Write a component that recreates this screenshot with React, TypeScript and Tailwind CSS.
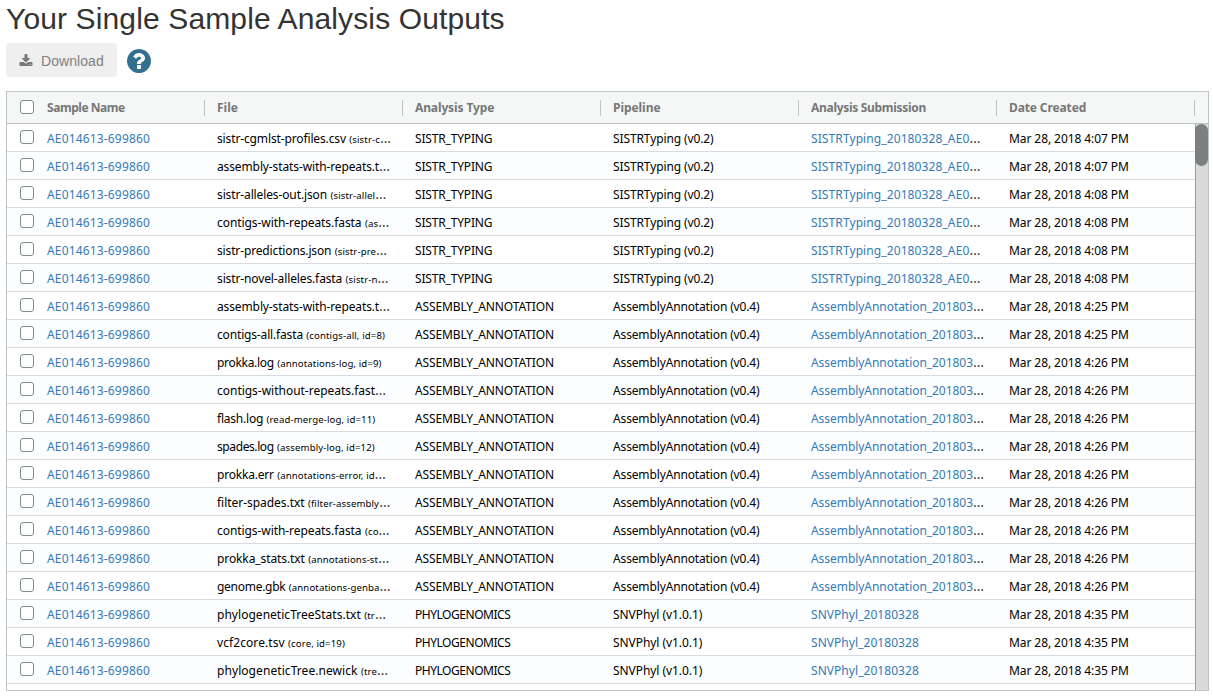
type Row = {
  file: string;
  fileClass: string;
  note?: string;
  fileCut?: boolean;
  type: string;
  typeClass: string;
  pipeline: string;
  pipelineClass: string;
  submission: string;
  submissionClass: string;
  submissionCut?: boolean;
  time: string;
};

const sistr = {
  type: "SISTR_TYPING",
  typeClass: "tracking-[-0.17px]",
  pipeline: "SISTRTyping (v0.2)",
  pipelineClass: "tracking-[-0.11px]",
  submission: "SISTRTyping_20180328_AE0",
  submissionClass: "tracking-[0.1px]",
  submissionCut: true,
};
const assembly = {
  type: "ASSEMBLY_ANNOTATION",
  typeClass: "tracking-[-0.11px]",
  pipeline: "AssemblyAnnotation (v0.4)",
  pipelineClass: "tracking-[-0.14px]",
  submission: "AssemblyAnnotation_201803",
  submissionClass: "tracking-[-0.05px]",
  submissionCut: true,
};
const phylo = {
  type: "PHYLOGENOMICS",
  typeClass: "tracking-[-0.47px]",
  pipeline: "SNVPhyl (v1.0.1)",
  pipelineClass: "tracking-[-0.06px]",
  submission: "SNVPhyl_20180328",
  submissionClass: "tracking-[0.05px]",
};

const rows: Row[] = [
  { file: "sistr-cgmlst-profiles.csv", fileClass: "tracking-[-0.13px]", note: "(sistr-c", fileCut: true, ...sistr, time: "4:07" },
  { file: "assembly-stats-with-repeats.t", fileClass: "tracking-[-0.12px]", fileCut: true, ...sistr, time: "4:07" },
  { file: "sistr-alleles-out.json", fileClass: "tracking-[-0.12px]", note: "(sistr-allel", fileCut: true, ...sistr, time: "4:08" },
  { file: "contigs-with-repeats.fasta", fileClass: "tracking-[-0.07px]", note: "(as", fileCut: true, ...sistr, time: "4:08" },
  { file: "sistr-predictions.json", fileClass: "tracking-[-0.14px]", note: "(sistr-pre", fileCut: true, ...sistr, time: "4:08" },
  { file: "sistr-novel-alleles.fasta", fileClass: "tracking-[-0.12px]", note: "(sistr-n", fileCut: true, ...sistr, time: "4:08" },
  { file: "assembly-stats-with-repeats.t", fileClass: "tracking-[-0.12px]", fileCut: true, ...assembly, time: "4:25" },
  { file: "contigs-all.fasta", fileClass: "tracking-[-0.16px]", note: "(contigs-all, id=8)", ...assembly, time: "4:25" },
  { file: "prokka.log", fileClass: "tracking-[-0.3px]", note: "(annotations-log, id=9)", ...assembly, time: "4:26" },
  { file: "contigs-without-repeats.fast", fileClass: "tracking-[-0.02px]", fileCut: true, ...assembly, time: "4:26" },
  { file: "flash.log", fileClass: "tracking-[-0.22px]", note: "(read-merge-log, id=11)", ...assembly, time: "4:26" },
  { file: "spades.log", fileClass: "tracking-[-0.4px]", note: "(assembly-log, id=12)", ...assembly, time: "4:26" },
  { file: "prokka.err", fileClass: "tracking-[-0.2px]", note: "(annotations-error, id", fileCut: true, ...assembly, time: "4:26" },
  { file: "filter-spades.txt", fileClass: "tracking-[-0.04px]", note: "(filter-assembly", fileCut: true, ...assembly, time: "4:26" },
  { file: "contigs-with-repeats.fasta", fileClass: "tracking-[-0.07px]", note: "(co", fileCut: true, ...assembly, time: "4:26" },
  { file: "prokka_stats.txt", fileClass: "tracking-[-0.1px]", note: "(annotations-st", fileCut: true, ...assembly, time: "4:26" },
  { file: "genome.gbk", fileClass: "tracking-[-0.28px]", note: "(annotations-genba", fileCut: true, ...assembly, time: "4:26" },
  { file: "phylogeneticTreeStats.txt", fileClass: "tracking-[0.03px]", note: "(tr", fileCut: true, ...phylo, time: "4:35" },
  { file: "vcf2core.tsv", fileClass: "tracking-[0.08px]", note: "(core, id=19)", ...phylo, time: "4:35" },
  { file: "phylogeneticTree.newick", fileClass: "tracking-[0.07px]", note: "(tre", fileCut: true, ...phylo, time: "4:35" },
];

const headers = [
  { title: "Sample Name", className: "tracking-[-0.45px]" },
  { title: "File", className: "tracking-normal" },
  { title: "Analysis Type", className: "tracking-[-0.12px]" },
  { title: "Pipeline", className: "tracking-[-0.05px]" },
  { title: "Analysis Submission", className: "tracking-[-0.3px]" },
  { title: "Date Created", className: "tracking-[-0.12px]" },
];

function DownloadIcon() {
  return (
    <svg viewBox="0 0 1792 1792" fill="currentColor" className="mr-[8.5px] -ml-[0.5px] mt-px size-[14px] shrink-0 text-[#777]">
      <path d="M1344 1344q0-26-19-45t-45-19-45 19-19 45 19 45 45 19 45-19 19-45zm256 0q0-26-19-45t-45-19-45 19-19 45 19 45 45 19 45-19 19-45zm128-224v320q0 40-28 68t-68 28h-1472q-40 0-68-28t-28-68v-320q0-40 28-68t68-28h465l135 136q58 56 136 56t136-56l136-136h464q40 0 68 28t28 68zm-325-569q17 41-14 70l-448 448q-18 19-45 19t-45-19l-448-448q-31-29-14-70 17-39 59-39h256v-448q0-26 19-45t45-19h256q26 0 45 19t19 45v448h256q42 0 59 39z" />
    </svg>
  );
}

function HelpIcon() {
  return (
    <svg viewBox="0 0 1792 1792" fill="currentColor" className="mt-px ml-2 size-7 shrink-0 text-[#31708f]">
      <path d="M1024 1376v-192q0-14-9-23t-23-9h-192q-14 0-23 9t-9 23v192q0 14 9 23t23 9h192q14 0 23-9t9-23zm256-672q0-88-55.5-163t-138.5-116-170-41q-243 0-371 213-15 24 8 42l132 100q7 6 19 6 16 0 25-12 53-68 86-92 34-24 86-24 48 0 85.5 26t37.5 59q0 38-20 61t-68 45q-63 28-115.5 86.5t-52.5 125.5v36q0 14 9 23t23 9h192q14 0 23-9t9-23q0-19 21.5-49.5t54.5-49.5q32-18 49-28.5t46-35 44.5-48 28-60.5 12.5-81zm384 192q0 209-103 385.5t-279.5 279.5-385.5 103-385.5-103-279.5-279.5-103-385.5 103-385.5 279.5-279.5 385.5-103 385.5 103 279.5 279.5 103 385.5z" />
    </svg>
  );
}

function Checkbox({ className = "" }: { className?: string }) {
  return (
    <span
      role="checkbox"
      aria-checked={false}
      className={`mr-[13px] block size-[14px] shrink-0 rounded-[3px] border border-[#7f8c8d] bg-white ${className}`}
    />
  );
}

function Ellipsis() {
  return <span className="text-[14px] leading-none text-[#444]">…</span>;
}

export default function App() {
  return (
    <main className="h-[697px] overflow-hidden bg-white pl-1.5 font-['Noto_Sans',sans-serif] text-xs text-black">
      <h1 className="h-[43px] pt-[2px] font-['Liberation_Sans',sans-serif] text-[30px] leading-[33px] tracking-[0.13px] text-[#333]">
        Your Single Sample Analysis Outputs
      </h1>
      <div className="flex h-[34px] items-center">
        <button className="flex h-[34px] w-[111px] items-center rounded-[3px] bg-[#efefef] pt-px pl-[13px] font-['Liberation_Sans',sans-serif] text-sm tracking-[0.07px] text-[#818181]">
          <DownloadIcon />
          Download
        </button>
        <HelpIcon />
      </div>
      <section className="mt-[14px] h-[600px] w-[1203px] overflow-hidden border border-[#bdc3c7]">
        <header className="flex h-8 items-center border-b border-[#bdc3c7] bg-[#f5f7f7] font-bold text-[#757877]">
          {headers.map(({ title, className }, i) => (
            <div key={title} className="flex h-4 w-[198px] items-center border-r border-[#bdc3c7] pl-3 whitespace-nowrap">
              {i === 0 && <Checkbox className="-mt-0.5 ml-px" />}
              <span className={className}>{title}</span>
            </div>
          ))}
        </header>
        <div className="flex">
          <div className="w-[1188px]">
            {rows.map((row, i) => (
              <div
                key={i}
                className="flex h-7 items-center border-b border-[#d9dcde] bg-white pt-[2px] whitespace-nowrap even:bg-[#fcfdfe] *:h-4 *:w-[198px] *:shrink-0 *:pl-3"
              >
                <div className="flex items-center text-[#337ab7]">
                  <Checkbox className="-mt-[3px] ml-px" />
                  <span className="tracking-[0.16px]">AE014613-699860</span>
                </div>
                <div>
                  <span className={row.fileClass}>{row.file}</span>
                  {row.note && <span className="ml-[3.4px] text-[9.6px] tracking-[0.12px]">{row.note}</span>}
                  {row.fileCut && <Ellipsis />}
                </div>
                <div><span className={row.typeClass}>{row.type}</span></div>
                <div><span className={row.pipelineClass}>{row.pipeline}</span></div>
                <div>
                  <span className={`text-[#337ab7] ${row.submissionClass}`}>{row.submission}</span>
                  {row.submissionCut && <Ellipsis />}
                </div>
                <div><span className="tracking-[-0.08px]">Mar 28, 2018 {row.time} PM</span></div>
              </div>
            ))}
          </div>
          <div className="h-[566px] w-[13px] bg-[#dadada] shadow-[inset_1px_0_0_#999]">
            <div className="h-[42px] rounded-full bg-[#7c8080]" />
          </div>
        </div>
      </section>
    </main>
  );
}
